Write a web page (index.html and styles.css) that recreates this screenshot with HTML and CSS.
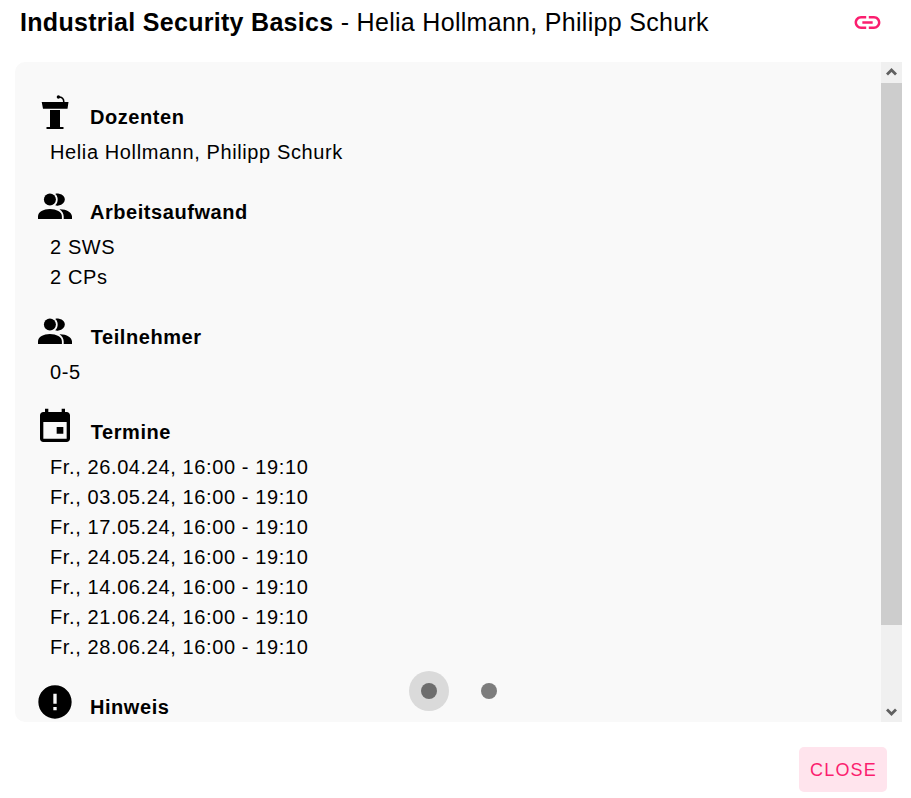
FILE: index.html
```html
<!DOCTYPE html>
<html lang="de">
<head>
<meta charset="utf-8">
<title>Industrial Security Basics</title>
<link rel="stylesheet" href="styles.css">
</head>
<body>
<svg class="defs" aria-hidden="true">
  <symbol id="people" viewBox="0 0 40 40">
    <circle cx="14.900" cy="14.600" r="6"/>
    <path d="M20.200 8.900C23 10.500 24 17 20.200 20.300C21.300 20.700 22.500 20.800 23.500 20.500C31.800 19 32 10 24 8.700C22.700 8.500 21.300 8.500 20.200 8.900z"/>
    <path d="M3 34v-2.500c0-4.500 5.500-7.400 11.900-7.400s12 2.900 12 7.400V34z"/>
    <path d="M24.500 24.200C31.500 24 37 27.500 37 31.500V34h-8.300v-2.500c0-3-1.500-5.500-4.200-7.300z"/>
  </symbol>
</svg>
<header class="header">
  <h1 class="title"><b>Industrial Security Basics</b> <span class="lecturers">- Helia Hollmann, Philipp Schurk</span></h1>
  <svg class="link" viewBox="0 0 24 24"><path d="M3.9 12c0-1.71 1.39-3.1 3.1-3.1h4V7H7c-2.76 0-5 2.24-5 5s2.24 5 5 5h4v-1.9H7c-1.71 0-3.1-1.39-3.1-3.1zM8 13h8v-2H8v2zm9-6h-4v1.9h4c1.71 0 3.1 1.39 3.1 3.1s-1.39 3.1-3.1 3.1h-4V17h4c2.76 0 5-2.24 5-5s-2.24-5-5-5z"/></svg>
</header>
<main class="panel">
  <div class="content">
    <section class="section">
      <div class="heading">
        <svg class="icon" viewBox="0 0 40 40"><path d="M6.700 12h26.800l-1 6.800H8zM15 20h10v17h3.500v2h-17v-2H15z"/><path class="mic" d="M23.600 7c3.600 0 5.200 2 5.200 5"/><circle cx="23.400" cy="7" r="1.700"/></svg>
        <h2>Dozenten</h2>
      </div>
      <p>Helia Hollmann, Philipp Schurk</p>
    </section>
    <section class="section">
      <div class="heading"><svg class="icon"><use href="#people"/></svg><h2>Arbeitsaufwand</h2></div>
      <p>2 SWS</p>
      <p>2 CPs</p>
    </section>
    <section class="section">
      <div class="heading"><svg class="icon"><use href="#people"/></svg><h2 class="t">Teilnehmer</h2></div>
      <p>0-5</p>
    </section>
    <section class="section">
      <div class="heading">
        <svg class="icon" viewBox="0 -.2 24 24"><path d="M19 4h-1V2h-2v2H8V2H6v2H5c-1.110 0-2 .9-2 2v14c0 1.100.89 2 2 2h14c1.100 0 2-.9 2-2V6c0-1.100-.9-2-2-2zm0 16H5V10h14v10zm-2-7h-4v4h4z"/></svg>
        <h2 class="t">Termine</h2>
      </div>
      <p>Fr., 26.04.24, 16:00 - 19:10</p>
      <p>Fr., 03.05.24, 16:00 - 19:10</p>
      <p>Fr., 17.05.24, 16:00 - 19:10</p>
      <p>Fr., 24.05.24, 16:00 - 19:10</p>
      <p>Fr., 14.06.24, 16:00 - 19:10</p>
      <p>Fr., 21.06.24, 16:00 - 19:10</p>
      <p>Fr., 28.06.24, 16:00 - 19:10</p>
    </section>
    <section class="section">
      <div class="heading">
        <svg class="icon" viewBox="0 -1.200 24 24"><path d="M12 2C6.480 2 2 6.480 2 12s4.480 10 10 10 10-4.480 10-10S17.520 2 12 2zm1 15h-2v-2h2v2zm0-4h-2V7h2v6z"/></svg>
        <h2>Hinweis</h2>
      </div>
    </section>
  </div>
  <div class="scrollbar">
    <svg class="arrow" viewBox="0 0 21 21"><path d="M6 12.500l4.500-4.500 4.500 4.500"/></svg>
    <div class="thumb"></div>
    <svg class="arrow" viewBox="0 0 21 21"><path d="M6 8.500l4.500 4.500L15 8.500"/></svg>
  </div>
  <div class="dots"><span class="dot active"></span><span class="dot"></span></div>
</main>
<footer class="footer"><button class="close">CLOSE</button></footer>
</body>
</html>
```
FILE: styles.css
```css
* { box-sizing: border-box; }
body {
  margin: 0;
  height: 798px;
  overflow: hidden;
  background: #fff;
  color: #000;
  font-family: "Liberation Sans", Arial, sans-serif;
}
h1, h2, p { margin: 0; }
.defs { display: none; }
.header {
  display: flex;
  justify-content: space-between;
  height: 62px;
  padding: 7px 28.500px 0 20px;
}
.title {
  font-size: 25px;
  line-height: 30px;
  font-weight: 400;
  letter-spacing: .3px;
  white-space: nowrap;
}
.link { width: 31px; height: 31px; margin-top: -.5px; fill: #fb1e6f; }
.panel {
  position: relative;
  display: flex;
  width: 887px;
  height: 660px;
  margin-left: 15px;
  overflow: hidden;
  background: #f9f9f9;
  border-radius: 10px 0 0 10px;
}
.content { flex: 1; padding: 28px 20px 0; }
.section { padding-bottom: 18px; }
.heading { display: flex; height: 47px; }
.icon { width: 40px; height: 40px; flex: none; }
.mic { fill: none; stroke: #000; stroke-width: 1.600; }
h2 {
  margin: 12px 0 0 15px;
  font-size: 20px;
  line-height: 30px;
  letter-spacing: .55px;
}
.t { margin-left: 15.800px; }
p {
  padding-left: 15px;
  font-size: 20px;
  line-height: 30px;
  letter-spacing: .61px;
}
.scrollbar {
  display: flex;
  flex-direction: column;
  width: 21px;
  background: #f0f0f0;
}
.arrow { width: 21px; height: 21px; fill: none; stroke: #606060; stroke-width: 2.800; }
.thumb { height: 542px; background: #cdcdcd; }
.scrollbar .arrow:last-child { margin-top: auto; }
.dots {
  position: absolute;
  left: 393.500px;
  bottom: 11px;
  display: flex;
  gap: 20px;
}
.dot {
  display: grid;
  place-items: center;
  width: 40px;
  height: 40px;
  border-radius: 50%;
}
.dot::before {
  content: "";
  width: 16px;
  height: 16px;
  border-radius: 50%;
  background: #7d7d7d;
}
.dot.active { background: #dadada; }
.dot.active::before { background: #6d6d6d; }
.footer { display: flex; justify-content: flex-end; padding: 25px 24px 0 0; }
.close {
  width: 88px;
  height: 45px;
  padding: 1px 0 0 1px;
  border: 0;
  border-radius: 5px;
  background: #ffe4ed;
  color: #fb1e6f;
  font: 18px/45px "Liberation Sans", Arial, sans-serif;
  letter-spacing: 1.200px;
}
```
